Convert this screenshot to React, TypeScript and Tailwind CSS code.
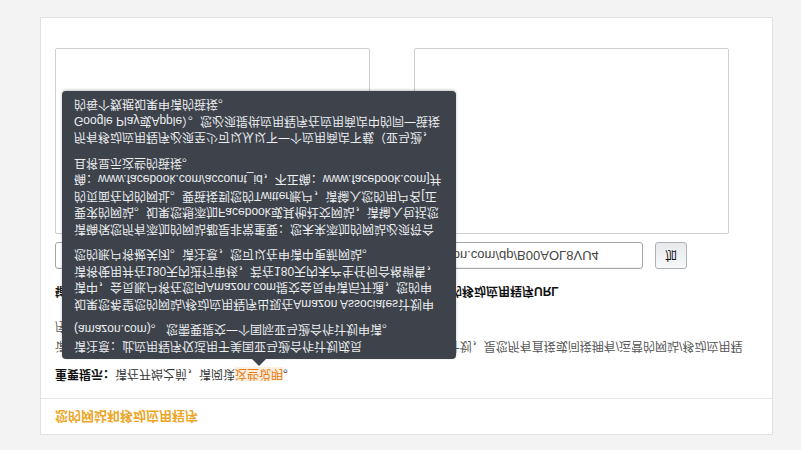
import { useState } from "react";

// The whole panel is shown upside down (the capture was flipped vertically),
// so the page is laid out normally and mirrored on the y axis at the root.

const TIP_PARAGRAPHS = [
  "请注意：此应用程序仅适用于美国亚马逊合作计划成员 (amazon.com)。 您需要提交一个国际亚马逊合作计划申请。",
  "如果您希望您的网站/移动应用程序出现在Amazon Associates计划申请中，会员账户将在您向Amazon.com提交会员申请后开通，您的申请将使用并在180天内进行审核，若在180天内未产生任何合格销售，您的账户将被关闭。请注意，您可以在申请中更新网站。",
  "请确保您所有添加的网站都是非常重要：您未来添加的网站必须符合要求的网站。如果您想添加Facebook或其他社交网站，请输入包括您的页面在内的网址。要链接到您的Twitter账户，请输入您的用户名[正确：www.facebook.com/account_id，不正确：www.facebook.com]并且将显示这些的链接。",
  "所有移动应用程序必须至少可以从以下一个应用商店下载（亚马逊，Google Play或Apple）。您必须提供应用程序在应用商店中的同一链接的每个数据如果申请的链接。",
];

function UrlField({ label, value }: { label: string; value?: string }) {
  const [text, setText] = useState(value ?? "");
  return (
    <div>
      <label className="block text-[12px] font-bold leading-[20px] text-[#111]">{label}</label>
      <div className="mt-[12px] flex items-center">
        <input
          value={text}
          onChange={(e) => setText(e.target.value)}
          className="h-[27px] w-[229px] rounded-[3px] border border-[#a6a6a6] bg-white px-[6px] text-[13px] text-[#444] shadow-[inset_0_1px_0_rgba(0,0,0,0.07)] outline-none"
        />
        <button className="ml-[12px] h-[27px] w-[32px] rounded-[3px] border border-[#adb1b8] bg-gradient-to-b from-[#f7f8fa] to-[#e7e9ec] text-[12px] text-[#111]">
          加
        </button>
      </div>
      <textarea
        readOnly
        className="mt-[8px] block h-[186px] w-[315px] resize-none rounded-[2px] border border-[#d0d0d0] bg-white outline-none"
      />
    </div>
  );
}

export default function App() {
  return (
    <div className="h-[450px] w-full overflow-hidden bg-[#f3f3f3] font-['Liberation_Sans','Noto_Sans_CJK_SC',sans-serif] -scale-y-100">
      <div className="pt-[15px] pl-[40px]">
        <div className="h-[418px] w-[733px] border border-[#e0e0e0] bg-white">
          {/* header */}
          <div className="flex h-[36px] items-center border-b border-[#e7e7e7] px-[14px]">
            <h2 className="text-[13px] font-semibold text-[#eca628]">您的网站和移动应用程序</h2>
          </div>

          <div className="px-[14px] pt-[14px]">
            <p className="text-[12px] leading-[20px] text-[#333]">
              <span className="font-bold text-[#111]">重要提示：</span>
              请在开始之前，请阅读
              <span className="relative bg-[#fdeedd] text-[#e47911]">
                这些说明
                {/* tooltip */}
                <span className="absolute left-1/2 top-full z-10 mt-[8px] block w-[394px] -translate-x-1/2 rounded-[4px] bg-[#3d424b] px-[12px] py-[5px] text-left text-[12px] font-normal leading-[16.5px] text-[#eceef0] shadow-[0_1px_3px_rgba(0,0,0,0.25)]">
                  <span className="absolute -top-[7px] left-1/2 h-0 w-0 -translate-x-1/2 border-x-[7px] border-b-[7px] border-x-transparent border-b-[#3d424b]" />
                  {TIP_PARAGRAPHS.map((t, i) => (
                    <span key={i} className={i === 0 ? "block" : "mt-[9px] block"}>
                      {t}
                    </span>
                  ))}
                </span>
              </span>
              。
            </p>

            <p className="mt-[8px] text-[12px] leading-[20px] text-[#555]">
              请输入您希望加入的网站和移动应用程序，它们将用于Amazon Associates计划，是您所有直接或间接拥有/运营的网站/移动应用程序。您需要至少添加一个网站或移动应用程序。
            </p>

            <div className="mt-[15px] grid grid-cols-[345px_345px] gap-x-[14px]">
              <UrlField label="输入您的网站URL" />
              <UrlField label="输入您的移动应用程序URL" value="amazon.com/dp/B00AOL8VU4" />
            </div>
          </div>
        </div>
      </div>
    </div>
  );
}
